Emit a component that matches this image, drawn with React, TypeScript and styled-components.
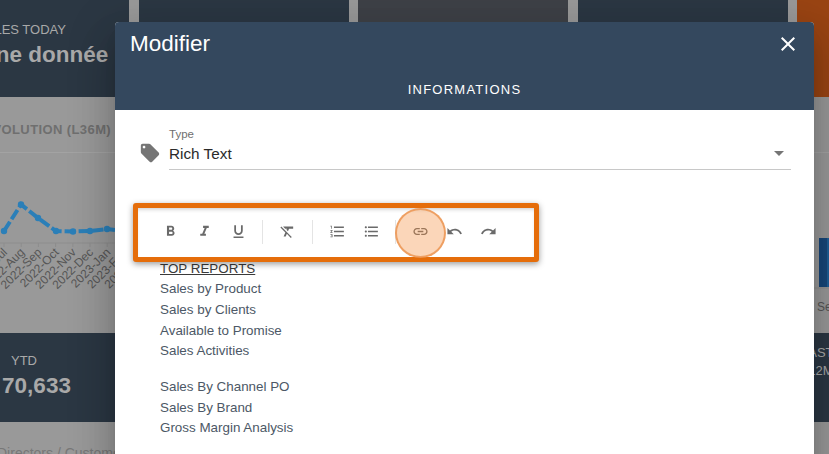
import styled, { createGlobalStyle } from 'styled-components'
import {
    MdArrowDropDown,
    MdClose,
    MdFormatBold,
    MdFormatClear,
    MdFormatItalic,
    MdFormatListBulleted,
    MdFormatListNumbered,
    MdFormatUnderlined,
    MdLink,
    MdLocalOffer,
    MdRedo,
    MdUndo,
} from 'react-icons/md'

const GlobalStyle = createGlobalStyle`
    html, body {
        margin: 0;
        padding: 0;
        background: #999;
        font-family: "Liberation Sans", Arial, sans-serif;
    }
    * {
        box-sizing: border-box;
    }
`

const Page = styled.div`
    position: relative;
    width: 829px;
    height: 454px;
    overflow: hidden;
    background: #999;
`

/* dashboard, dimmed behind the dialog */
const Dashboard = styled.div`
    margin-left: -81px;
    width: 1120px;
`
const KpiRow = styled.div<{ $height: number }>`
    display: grid;
    grid-template-columns: repeat(5, 210px);
    column-gap: 9.5px;
    height: ${props => props.$height}px;
`
const KpiCard = styled.div<{ $tone?: 'dark' | 'grey' | 'orange'; $top?: number }>`
    display: flex;
    flex-direction: column;
    align-items: center;
    padding-top: ${props => props.$top ?? 22}px;
    color: #a9a9a9;
    background: ${props =>
        props.$tone === 'orange' ? '#9a4413' : props.$tone === 'grey' ? '#3e4147' : '#2b3743'};
`
const KpiLabel = styled.div<{ $shift?: number }>`
    margin-right: ${props => props.$shift ?? 0}px;
    font-size: 13px;
    line-height: 15px;
`
const KpiValue = styled.div`
    margin-top: 5px;
    font-size: 22.5px;
    line-height: 26px;
    font-weight: bold;
    white-space: nowrap;
`
const KpiSide = styled.div`
    padding: 11px 0 0 4px;
    font-size: 13px;
    line-height: 18px;
    color: #a9a9a9;
    background: #2b3743;
`
const ChartRow = styled.div`
    display: grid;
    grid-template-columns: 650px 260px;
    height: 236px;
`
const ChartPanel = styled.div`
    display: flex;
    flex-direction: column;
`
const ChartHeader = styled.div`
    display: flex;
    align-items: flex-end;
    height: 56px;
    padding: 0 0 15px 15px;
    border-bottom: 1px solid #a3a3a3;
    font-size: 13px;
    font-weight: bold;
    line-height: 15px;
    letter-spacing: 0.4px;
    color: #6f6f6f;
`
const LineChart = styled.svg`
    display: block;
    margin-left: 81px;
`
const BarChart = styled.svg`
    display: block;
    margin-left: 200px;
`
const AxisLabel = styled.text`
    font-size: 12px;
    fill: #565656;
`
const TableTitle = styled.div`
    margin-top: 23px;
    padding-left: 78px;
    font-size: 14px;
    color: #777;
`

/* dialog */
const Dialog = styled.div`
    position: absolute;
    left: 115px;
    top: 22px;
    width: 699px;
    height: 460px;
    background: #fff;
    border-radius: 4px 4px 0 0;
    box-shadow: 0 11px 15px -7px rgba(0, 0, 0, 0.2), 0 24px 38px 3px rgba(0, 0, 0, 0.14),
        0 9px 46px 8px rgba(0, 0, 0, 0.12);
`
const DialogHeader = styled.div`
    height: 88px;
    background: #34485e;
    border-radius: 4px 4px 0 0;
    color: #fff;
`
const TitleBar = styled.div`
    display: flex;
    align-items: center;
    justify-content: space-between;
    height: 44px;
    padding: 0 14px 0 15px;
`
const Title = styled.div`
    font-size: 22.5px;
`
const CloseButton = styled.button`
    display: flex;
    padding: 0;
    border: none;
    background: none;
    color: #fff;
    font-size: 24px;
`
const TabLabel = styled.div`
    height: 44px;
    font-size: 13px;
    line-height: 48px;
    letter-spacing: 1.25px;
    text-align: center;
`
const SelectRow = styled.div`
    display: flex;
    align-items: flex-start;
    margin: 17px 23px 0 24px;
`
const TagIcon = styled.div`
    display: flex;
    width: 30px;
    margin-top: 15px;
    font-size: 22px;
    color: #757575;
`
const Select = styled.div`
    flex: 1;
    position: relative;
    height: 43px;
    border-bottom: 1px solid #c8c8c8;
`
const SelectLabel = styled.div`
    font-size: 11.5px;
    line-height: 14px;
    color: #6f6f6f;
`
const SelectValue = styled.div`
    margin-top: 4px;
    font-size: 15.3px;
    line-height: 18px;
    color: #2a2a2a;
`
const Caret = styled.div`
    position: absolute;
    right: 0;
    top: 14px;
    display: flex;
    font-size: 24px;
    color: #757575;
`
const Toolbar = styled.div`
    position: relative;
    display: flex;
    align-items: center;
    width: 406px;
    height: 59px;
    margin: 33px 0 0 18px;
    padding: 0 0 2px 15px;
    border: 5px solid #e56d0a;
    border-radius: 3px;
    box-shadow: 0 2px 6px rgba(0, 0, 0, 0.4), inset 0 3px 4px -2px rgba(0, 0, 0, 0.22);
    background: #fff;
`
const ToolButton = styled.div`
    display: flex;
    align-items: center;
    justify-content: center;
    width: 34px;
    height: 34px;
    font-size: 17px;
    color: #6a6a6a;
`
const Separator = styled.div`
    width: 1px;
    height: 24px;
    margin: 0 7.5px 0 7px;
    background: #e4e4e4;
`
const Spotlight = styled.div`
    position: absolute;
    left: 257px;
    top: 0;
    width: 51px;
    height: 50px;
    border: 2px solid rgba(236, 150, 84, 0.85);
    border-radius: 50%;
    background: rgba(243, 140, 62, 0.36);
`
const Editor = styled.div`
    margin: -3.5px 0 0 45px;
    font-size: 13.4px;
    line-height: 20.7px;
    color: #4c5866;
`
const EditorTitle = styled.div`
    color: #3a3a3a;
    text-decoration: underline;
`
const EditorBlock = styled.div`
    margin-bottom: 15px;
`

const chartPoints = [
    [4, 78],
    [21, 51.5],
    [38, 65],
    [56, 78],
    [73, 78.5],
    [90, 78],
    [107, 76],
    [115, 77],
]
const months = ['2022-Jul', '2022-Aug', '2022-Sep', '2022-Oct', '2022-Nov', '2022-Dec', '2023-Jan', '2023-Feb', '2023-Mar']

const App = () => {
    return (
        <Page>
            <GlobalStyle />
            <Dashboard>
                <KpiRow $height={97}>
                    <KpiCard>
                        <KpiLabel $shift={5}>SALES TODAY</KpiLabel>
                        <KpiValue>Aucune donnée</KpiValue>
                    </KpiCard>
                    <KpiCard />
                    <KpiCard $tone='grey' />
                    <KpiCard />
                    <KpiCard $tone='orange'>
                        <KpiLabel>F</KpiLabel>
                    </KpiCard>
                </KpiRow>
                <ChartRow>
                    <ChartPanel>
                        <ChartHeader>SALES EVOLUTION (L36M)</ChartHeader>
                        <LineChart width={120} height={180} viewBox='0 0 120 180'>
                            <line x1='0' y1='90' x2='120' y2='90' stroke='#8d8d8d' />
                            <polyline
                                points={chartPoints.map(p => p.join(',')).join(' ')}
                                fill='none'
                                stroke='#2b7fb8'
                                strokeWidth='4'
                                strokeDasharray='11 3'
                            />
                            {chartPoints.slice(0, 7).map(p => (
                                <circle key={p[0]} cx={p[0]} cy={p[1]} r='3.2' fill='#2b7fb8' />
                            ))}
                            {months.map((month, i) => (
                                <g key={month}>
                                    <line x1={4 + i * 17.2} y1='90' x2={4 + i * 17.2} y2='94' stroke='#8d8d8d' />
                                    <AxisLabel
                                        textAnchor='end'
                                        transform={`translate(${8 + i * 17.2} 100) rotate(-45)`}
                                    >
                                        {month}
                                    </AxisLabel>
                                </g>
                            ))}
                        </LineChart>
                    </ChartPanel>
                    <ChartPanel>
                        <ChartHeader />
                        <BarChart width={60} height={180} viewBox='0 0 60 180'>
                            <rect x='50' y='85' width='8' height='49' fill='#174679' />
                            <rect x='58' y='85' width='2' height='49' fill='#1f5f96' />
                            <line x1='0' y1='135' x2='60' y2='135' stroke='#8d8d8d' />
                            <AxisLabel x='48' y='158'>Sep</AxisLabel>
                        </BarChart>
                    </ChartPanel>
                </ChartRow>
                <KpiRow $height={89}>
                    <KpiCard $top={20}>
                        <KpiLabel>YTD</KpiLabel>
                        <KpiValue>$&nbsp;&nbsp;70,633</KpiValue>
                    </KpiCard>
                    <KpiCard />
                    <KpiCard $tone='grey' />
                    <KpiCard />
                    <KpiSide>
                        LAST
                        <br />
                        L12M
                    </KpiSide>
                </KpiRow>
                <TableTitle>Directors / Customers</TableTitle>
            </Dashboard>

            <Dialog>
                <DialogHeader>
                    <TitleBar>
                        <Title>Modifier</Title>
                        <CloseButton>
                            <MdClose />
                        </CloseButton>
                    </TitleBar>
                    <TabLabel>INFORMATIONS</TabLabel>
                </DialogHeader>
                <SelectRow>
                    <TagIcon>
                        <MdLocalOffer />
                    </TagIcon>
                    <Select>
                        <SelectLabel>Type</SelectLabel>
                        <SelectValue>Rich Text</SelectValue>
                        <Caret>
                            <MdArrowDropDown />
                        </Caret>
                    </Select>
                </SelectRow>
                <Toolbar>
                    <ToolButton><MdFormatBold /></ToolButton>
                    <ToolButton><MdFormatItalic /></ToolButton>
                    <ToolButton><MdFormatUnderlined /></ToolButton>
                    <Separator />
                    <ToolButton><MdFormatClear /></ToolButton>
                    <Separator />
                    <ToolButton><MdFormatListNumbered /></ToolButton>
                    <ToolButton><MdFormatListBulleted /></ToolButton>
                    <Separator />
                    <ToolButton><MdLink /></ToolButton>
                    <ToolButton><MdUndo /></ToolButton>
                    <ToolButton><MdRedo /></ToolButton>
                    <Spotlight />
                </Toolbar>
                <Editor>
                    <EditorBlock>
                        <EditorTitle>TOP REPORTS</EditorTitle>
                        <div>Sales by Product</div>
                        <div>Sales by Clients</div>
                        <div>Available to Promise</div>
                        <div>Sales Activities</div>
                    </EditorBlock>
                    <EditorBlock>
                        <div>Sales By Channel PO</div>
                        <div>Sales By Brand</div>
                        <div>Gross Margin Analysis</div>
                    </EditorBlock>
                </Editor>
            </Dialog>
        </Page>
    )
}

export default App
